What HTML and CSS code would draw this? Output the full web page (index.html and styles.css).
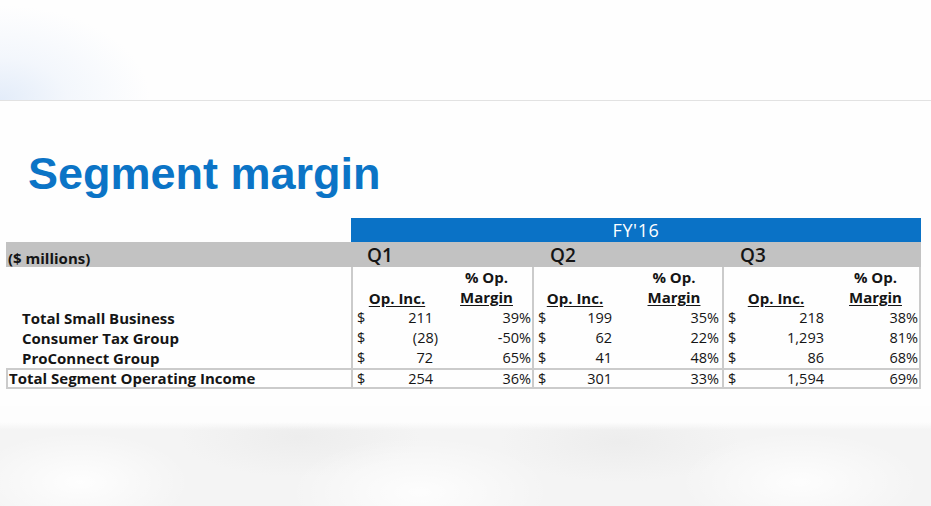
FILE: index.html
```html
<!DOCTYPE html>
<html>
<head>
<meta charset="utf-8">
<link rel="stylesheet" href="styles.css">
</head>
<body>
<div class="top-band"></div>
<main class="slide">
  <h1 class="title">Segment margin</h1>
  <div class="table">
    <div class="row fy-row">
      <div class="cell"></div>
      <div class="fy">FY'16</div>
    </div>
    <div class="row gray-row">
      <div class="cell units">($ millions)</div>
      <div class="cell q q1">Q1</div>
      <div class="cell q q2">Q2</div>
      <div class="cell q q3">Q3</div>
    </div>
    <div class="row head-row">
      <div class="cell label"></div>
      <div class="cell qc q1"><span class="h-inc">Op. Inc.</span><span class="h-pct">% Op.<br><u>Margin</u></span></div>
      <div class="cell qc q2"><span class="h-inc">Op. Inc.</span><span class="h-pct">% Op.<br><u>Margin</u></span></div>
      <div class="cell qc q3 last"><span class="h-inc">Op. Inc.</span><span class="h-pct">% Op.<br><u>Margin</u></span></div>
    </div>
    <div class="row data-row">
      <div class="cell label">Total Small Business</div>
      <div class="cell qc q1"><span class="amt"><span>$</span><span>211</span></span><span class="pct">39%</span></div>
      <div class="cell qc q2"><span class="amt"><span>$</span><span>199</span></span><span class="pct">35%</span></div>
      <div class="cell qc q3 last"><span class="amt"><span>$</span><span>218</span></span><span class="pct">38%</span></div>
    </div>
    <div class="row data-row">
      <div class="cell label">Consumer Tax Group</div>
      <div class="cell qc q1"><span class="amt"><span>$</span><span class="neg">(28)</span></span><span class="pct">-50%</span></div>
      <div class="cell qc q2"><span class="amt"><span>$</span><span>62</span></span><span class="pct">22%</span></div>
      <div class="cell qc q3 last"><span class="amt"><span>$</span><span>1,293</span></span><span class="pct">81%</span></div>
    </div>
    <div class="row data-row">
      <div class="cell label">ProConnect Group</div>
      <div class="cell qc q1"><span class="amt"><span>$</span><span>72</span></span><span class="pct">65%</span></div>
      <div class="cell qc q2"><span class="amt"><span>$</span><span>41</span></span><span class="pct">48%</span></div>
      <div class="cell qc q3 last"><span class="amt"><span>$</span><span>86</span></span><span class="pct">68%</span></div>
    </div>
    <div class="row data-row total-row">
      <div class="cell label total">Total Segment Operating Income</div>
      <div class="cell qc q1"><span class="amt"><span>$</span><span>254</span></span><span class="pct">36%</span></div>
      <div class="cell qc q2"><span class="amt"><span>$</span><span>301</span></span><span class="pct">33%</span></div>
      <div class="cell qc q3 last"><span class="amt"><span>$</span><span>1,594</span></span><span class="pct">69%</span></div>
    </div>
  </div>
</main>
<div class="bottom-band"></div>
</body>
</html>
```

FILE: styles.css
```css
* { box-sizing: border-box; }
html, body { margin: 0; padding: 0; }
body {
  width: 931px;
  height: 506px;
  overflow: hidden;
  background: #fdfdfd;
  font-family: "Open Sans", Lato, sans-serif;
  color: #151515;
  display: flex;
  flex-direction: column;
}
.top-band {
  height: 101px;
  flex: none;
  background:
    radial-gradient(ellipse 150px 95px at 0 100%, #e3ecf9 0%, rgba(236,242,251,0.6) 45%, rgba(255,255,255,0) 100%),
    #fefefe;
  border-bottom: 1px solid #e2e2e2;
  box-shadow: 0 1px 2px rgba(0,0,0,0.05);
}
.slide {
  flex: none;
  background: #fefefe;
  padding-top: 47px;
  height: 305px;
}
.title {
  margin: 0 0 0 28px;
  font-family: "Liberation Sans", Arial, sans-serif;
  font-weight: 700;
  font-size: 45px;
  line-height: 52px;
  height: 52px;
  color: #0b74c6;
}
.table {
  margin: 18px 0 0 6px;
  width: 915px;
}
.row {
  display: grid;
  grid-template-columns: 345px 181px 190px 199px;
}
.fy-row { grid-template-columns: 345px 570px; height: 24px; }
.fy {
  background: #0a72c6;
  color: #fff;
  text-align: center;
  font-size: 18px;
  line-height: 24px;
  font-weight: 500;
  letter-spacing: 0.6px;
}
.gray-row {
  background: #c2c2c2;
  height: 25px;
  align-items: center;
}
.units {
  padding-left: 2px;
  font-size: 15px;
  font-weight: 700;
  padding-top: 6px;
}
.q {
  font-size: 19px;
  font-weight: 600;
  line-height: 25px;
}
.gray-row .q1 { padding-left: 16px; }
.gray-row .q2 { padding-left: 18px; }
.gray-row .q3 { padding-left: 18px; }

.qc {
  border-left: 2px solid #cbcbcb;
  display: grid;
  font-size: 14.5px;
}
.qc.last { border-right: 2px solid #cbcbcb; }
.qc.q1 { grid-template-columns: 80px 1fr; }
.qc.q2 { grid-template-columns: 78px 1fr; }
.qc.q3 { grid-template-columns: 100px 1fr; }

.head-row { height: 41px; }
.head-row .qc { font-weight: 700; line-height: 20px; font-size: 15px; }
.h-inc {
  align-self: end;
  text-align: center;
  text-decoration: underline;
  text-underline-offset: 2px;
  line-height: 20px;
}
.q1 .h-inc { padding-left: 8px; }
.q2 .h-inc { padding-left: 4px; }
.q3 .h-inc { padding-left: 4px; }
.h-pct { text-align: center; padding-left: 8px; }
.q2 .h-pct { padding-left: 14px; }
.h-pct u { text-underline-offset: 2px; }

.data-row { height: 20px; line-height: 20px; }
.label {
  padding-left: 16px;
  font-size: 15px;
  font-weight: 700;
}
.amt {
  display: flex;
  justify-content: space-between;
  padding-left: 4px;
}
.neg { margin-right: -5px; }
.pct { text-align: right; padding-right: 1px; }
.q2 .pct { padding-right: 3px; }

.total-row {
  height: 21px;
  border-top: 2px solid #cbcbcb;
  border-bottom: 2px solid #cbcbcb;
  line-height: 17px;
}
.label.total {
  padding-left: 1px;
  border-left: 2px solid #cbcbcb;
}
.bottom-band {
  flex: 1;
  margin-top: 16px;
  background:
    linear-gradient(to bottom, rgba(253,253,253,1), rgba(253,253,253,0) 8px),
    radial-gradient(ellipse 110px 50px at 80px 60px, rgba(255,255,255,0.9), rgba(255,255,255,0)),
    radial-gradient(ellipse 130px 55px at 420px 70px, rgba(255,255,255,0.85), rgba(255,255,255,0)),
    radial-gradient(ellipse 120px 50px at 800px 60px, rgba(255,255,255,0.85), rgba(255,255,255,0)),
    radial-gradient(ellipse 120px 40px at 300px 15px, rgba(236,236,236,0.9), rgba(236,236,236,0)),
    radial-gradient(ellipse 120px 40px at 620px 20px, rgba(236,236,236,0.9), rgba(236,236,236,0)),
    #f4f4f4;
}
```
